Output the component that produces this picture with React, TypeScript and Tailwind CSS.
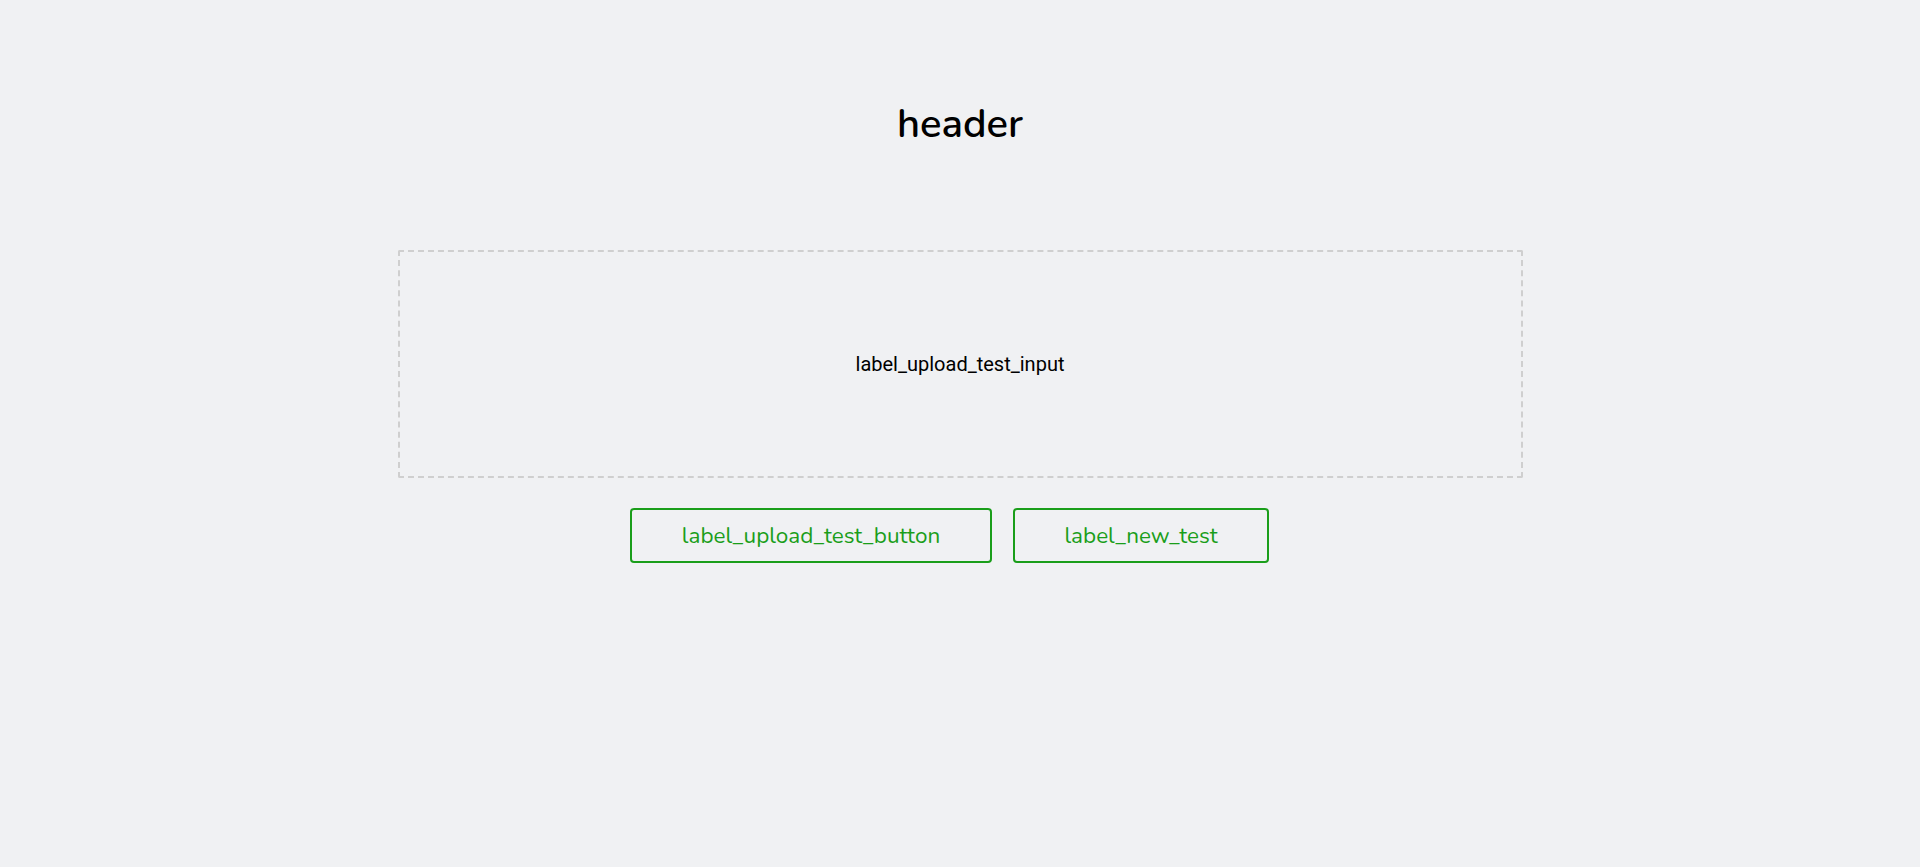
export default function App() {
  return (
    <div className="min-h-[867px] w-full bg-[#f0f1f3] flex flex-col items-center">
      <h1 className="mt-[100px] text-[40px] leading-[48px] text-black font-['Nunito','Open_Sans',sans-serif] font-semibold">
        header
      </h1>
      <div className="mt-[102px] w-[1125px] h-[228px] border-2 border-dashed border-[#cfcfcf] rounded-[2px] flex items-center justify-center">
        <span className="font-['Roboto',sans-serif] text-[20px] text-black">label_upload_test_input</span>
      </div>
      <div className="mt-[30px] flex gap-[21px] pr-[21px]">
        <button className="w-[362px] h-[55px] border-2 border-[#1a9e1a] rounded-[4px] text-[#1a9e1a] text-[22.5px] font-['Nunito','Open_Sans',sans-serif]">
          label_upload_test_button
        </button>
        <button className="w-[256px] h-[55px] border-2 border-[#1a9e1a] rounded-[4px] text-[#1a9e1a] text-[22.5px] font-['Nunito','Open_Sans',sans-serif]">
          label_new_test
        </button>
      </div>
    </div>
  );
}
